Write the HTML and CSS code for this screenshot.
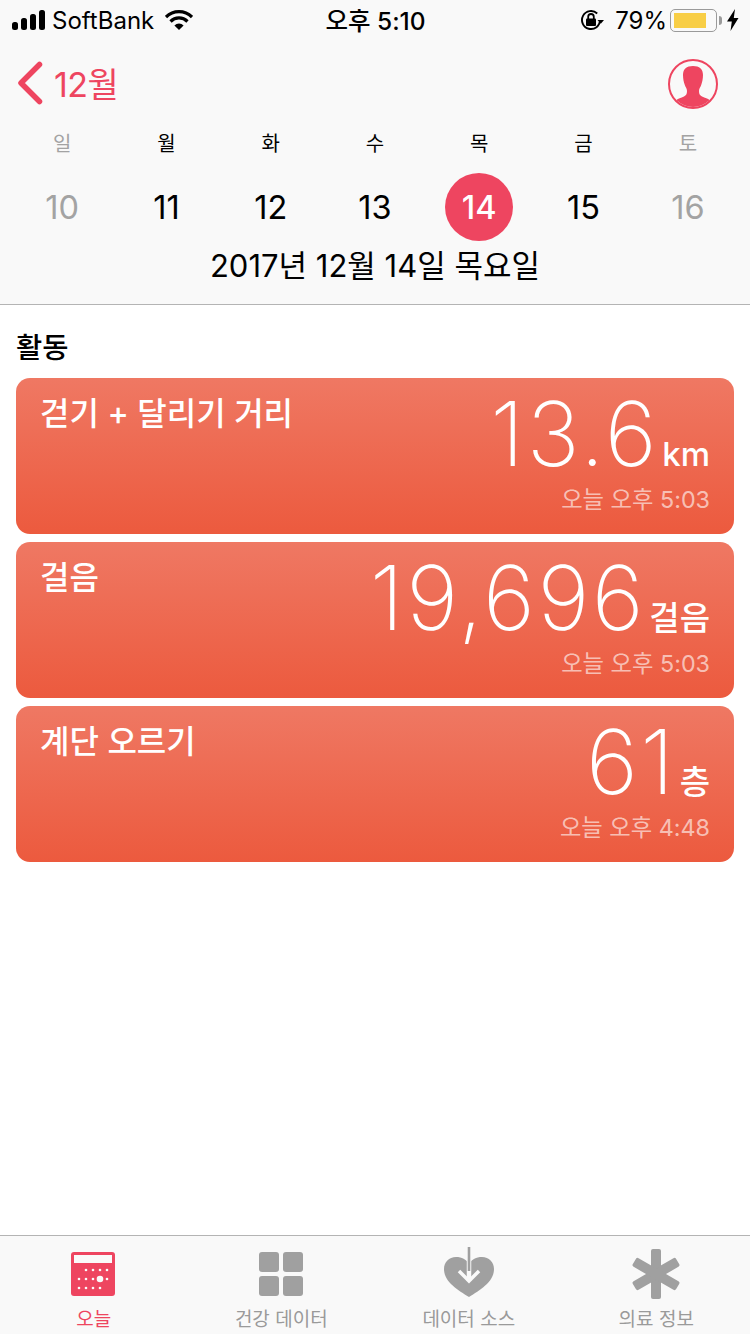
FILE: index.html
```html
<!DOCTYPE html>
<html lang="ko">
<head>
  <meta charset="UTF-8">
  <title>건강</title>
  <link rel="stylesheet" href="styles.css">
</head>
<body>
  <div class="app">
    <header class="top">
      <div class="status">
        <div class="status-left">
          <svg class="signal" width="33" height="20" viewBox="0 0 33 20">
            <rect x="0" y="12" width="6" height="8" rx="2.500" fill="#000"/>
            <rect x="9" y="8" width="6" height="12" rx="2.500" fill="#000"/>
            <rect x="18" y="4" width="6" height="16" rx="2.500" fill="#000"/>
            <rect x="27" y="0" width="6" height="20" rx="2.500" fill="#000"/>
          </svg>
          <span class="carrier">SoftBank</span>
          <svg class="wifi" width="28" height="20" viewBox="0 0 28 20">
            <path d="M14 20L9.400 15.400A6.500 6.500 0 0 1 18.600 15.400z" fill="#000"/>
            <path d="M5.500 11.500A12 12 0 0 1 22.500 11.500" fill="none" stroke="#000" stroke-width="3.200"/>
            <path d="M1 7A18.500 18.500 0 0 1 27 7" fill="none" stroke="#000" stroke-width="3.200"/>
          </svg>
        </div>
        <div class="clock">오후 5:10</div>
        <div class="status-right">
          <svg class="lock" width="24" height="22" viewBox="0 0 24 22">
            <path d="M20 11a9 9 0 1 1-2.800-6.500" fill="none" stroke="#000" stroke-width="1.900"/>
            <path d="M17.500 11h6.500l-3.200 3.800z" fill="#000"/>
            <rect x="6" y="9.500" width="10" height="7.500" rx="1" fill="#000"/>
            <path d="M8.200 10V7.800a2.800 2.800 0 0 1 5.600 0V10" fill="none" stroke="#000" stroke-width="1.800"/>
          </svg>
          <span class="percent">79%</span>
          <div class="battery">
            <div class="battery-shell"><div class="battery-fill"></div></div>
            <div class="battery-tip"></div>
          </div>
          <svg class="bolt" width="12" height="22" viewBox="0 0 12 22">
            <path d="M8 0L0 12.500h4.800L3.500 22l8-13H6.800z" fill="#000"/>
          </svg>
        </div>
      </div>

      <div class="nav">
        <div class="back">
          <svg width="26" height="44" viewBox="0 0 26 44">
            <path d="M22.500 3.500L4 22l18.500 18.500" fill="none" stroke="#ee4560" stroke-width="5.500" stroke-linecap="round" stroke-linejoin="round"/>
          </svg>
          <span class="month">12월</span>
        </div>
        <svg class="avatar" width="50" height="50" viewBox="0 0 50 50">
          <defs><clipPath id="avatarClip"><circle cx="25" cy="25" r="23"/></clipPath></defs>
          <circle cx="25" cy="25" r="24" fill="none" stroke="#ee4560" stroke-width="2"/>
          <path clip-path="url(#avatarClip)" d="M25 7c-6.500 0-10 3-10 9 0 4 .8 7 1.800 10 .6 2 2.200 3.500 2.200 6 0 2.800-.8 4.500-3 5.500-3 1.300-6 2-7.500 3.500-1 1-1.500 4-1.500 9h36c0-5-.5-8-1.500-9-1.500-1.500-4.500-2.200-7.500-3.500-2.200-1-3-2.700-3-5.500 0-2.500 1.600-4 2.200-6 1-3 1.800-6 1.800-10 0-6-3.500-9-10-9z" fill="#ee4560"/>
        </svg>
      </div>

      <div class="week">
        <span class="wd off">일</span>
        <span class="wd">월</span>
        <span class="wd">화</span>
        <span class="wd">수</span>
        <span class="wd">목</span>
        <span class="wd">금</span>
        <span class="wd off">토</span>
        <span class="day off">10</span>
        <span class="day">11</span>
        <span class="day">12</span>
        <span class="day">13</span>
        <span class="day"><span class="today">14</span></span>
        <span class="day">15</span>
        <span class="day off">16</span>
      </div>
      <div class="date">2017년 12월 14일 목요일</div>
    </header>

    <main class="content">
      <h2 class="section">활동</h2>
      <div class="cards">
        <div class="card">
          <div class="card-title">걷기 + 달리기 거리</div>
          <div class="card-data">
            <div class="reading"><span class="num">13.6</span><span class="unit">km</span></div>
            <div class="when">오늘 오후 5:03</div>
          </div>
        </div>
        <div class="card">
          <div class="card-title">걸음</div>
          <div class="card-data">
            <div class="reading"><span class="num">19,696</span><span class="unit">걸음</span></div>
            <div class="when">오늘 오후 5:03</div>
          </div>
        </div>
        <div class="card">
          <div class="card-title">계단 오르기</div>
          <div class="card-data">
            <div class="reading"><span class="num">61</span><span class="unit">층</span></div>
            <div class="when">오늘 오후 4:48</div>
          </div>
        </div>
      </div>
    </main>

    <nav class="tabs">
      <div class="tab active">
        <svg class="icon-cal" width="44" height="44" viewBox="0 0 44 44">
          <rect width="44" height="44" rx="3" fill="#ee4560"/>
          <rect x="3" y="3" width="38" height="8" fill="#fafafa"/>
          <g fill="#fafafa">
            <circle cx="15" cy="18" r="1.300"/><circle cx="22" cy="18" r="1.300"/><circle cx="29" cy="18" r="1.300"/><circle cx="36" cy="18" r="1.300"/>
            <circle cx="8" cy="27" r="1.300"/><circle cx="15" cy="27" r="1.300"/><circle cx="22" cy="27" r="1.300"/><circle cx="29" cy="27" r="3.300"/><circle cx="36" cy="27" r="1.300"/>
            <circle cx="8" cy="36" r="1.300"/><circle cx="15" cy="36" r="1.300"/><circle cx="22" cy="36" r="1.300"/><circle cx="29" cy="36" r="1.300"/>
          </g>
        </svg>
        <span>오늘</span>
      </div>
      <div class="tab">
        <svg class="icon-grid" width="44" height="44" viewBox="0 0 44 44" fill="#a0a0a0">
          <rect width="20" height="20" rx="3"/><rect x="24" width="20" height="20" rx="3"/>
          <rect y="24" width="20" height="20" rx="3"/><rect x="24" y="24" width="20" height="20" rx="3"/>
        </svg>
        <span>건강 데이터</span>
      </div>
      <div class="tab">
        <svg class="icon-heart" width="50" height="50" viewBox="0 0 50 50">
          <path d="M25 50C14 43 0 35 0 22 0 15 5 10 12 10c6 0 10 2.500 13 6.500C28 12.500 32 10 38 10c7 0 12 5 12 12 0 13-14 21-25 28z" fill="#a0a0a0"/>
          <path d="M25 12v22" stroke="#fafafa" stroke-width="4.500" fill="none"/>
          <path d="M25 0v24" stroke="#a0a0a0" stroke-width="2.600" fill="none"/>
          <path d="M15 24l10 10 10-10" stroke="#fafafa" stroke-width="3.500" fill="none"/>
        </svg>
        <span>데이터 소스</span>
      </div>
      <div class="tab">
        <svg class="icon-star" width="48" height="50" viewBox="0 0 48 50">
          <g fill="#a0a0a0">
            <rect x="19" y="0" width="10" height="50" rx="2"/>
            <rect x="19" y="0" width="10" height="50" rx="2" transform="rotate(60 24 25)"/>
            <rect x="19" y="0" width="10" height="50" rx="2" transform="rotate(-60 24 25)"/>
          </g>
        </svg>
        <span>의료 정보</span>
      </div>
    </nav>
  </div>
</body>
</html>
```

FILE: styles.css
```css
* {
  box-sizing: border-box;
}
body {
  margin: 0;
  background: #fff;
  color: #000;
  font-family: Inter, "Noto Sans CJK KR", sans-serif;
}
.app {
  display: flex;
  flex-direction: column;
  height: 1334px;
  overflow: hidden;
}

/* header */
.top {
  height: 305px;
  background: #f9f9f9;
  border-bottom: 1px solid #b4b4b4;
}
.status {
  display: grid;
  grid-template-columns: 1fr auto 1fr;
  align-items: center;
  height: 40px;
  padding: 0 11px 0 12px;
}
.status-left, .status-right {
  display: flex;
  align-items: center;
}
.status-right {
  justify-content: flex-end;
}
.carrier {
  margin-left: 7px;
  font-size: 24px;
}
.wifi {
  margin-left: 11px;
}
.clock {
  margin-top: -1px;
  font-weight: 500;
  font-size: 24.500px;
}
.percent {
  margin-left: 11px;
  font-size: 24px;
}
.battery {
  display: flex;
  align-items: center;
  margin-left: 3px;
}
.battery-shell {
  width: 47px;
  height: 23px;
  padding: 3px;
  border: 1.500px solid #9a9a9a;
  border-radius: 5px;
}
.battery-fill {
  width: 32px;
  height: 100%;
  background: #f8ce46;
}
.battery-tip {
  width: 3px;
  height: 9px;
  margin-left: 2px;
  background: #9a9a9a;
  border-radius: 0 3px 3px 0;
}
.bolt {
  margin-left: 5px;
}
.nav {
  display: flex;
  justify-content: space-between;
  align-items: flex-start;
  height: 84px;
  padding: 19px 32px 0 17px;
}
.back {
  display: flex;
  align-items: center;
  gap: 11px;
  height: 50px;
}
.back svg {
  margin-top: -2px;
}
.month {
  margin-top: -4px;
  color: #ee4560;
  font-size: 34px;
  letter-spacing: -0.500px;
}
.week {
  display: grid;
  grid-template-columns: repeat(7, 1fr);
  grid-template-rows: 38px 78px;
  row-gap: 6px;
  padding: 0 10px;
  text-align: center;
}
.wd {
  align-self: center;
  margin-top: -2px;
  font-size: 20px;
}
.day {
  display: flex;
  justify-content: center;
  align-items: center;
  font-size: 32.500px;
}
.off {
  color: #a3a3a3;
}
.today {
  display: flex;
  justify-content: center;
  align-items: center;
  width: 68px;
  height: 68px;
  border-radius: 50%;
  background: #ee4560;
  color: #fff;
  font-weight: 500;
}
.date {
  text-align: center;
  font-size: 31px;
  line-height: 40px;
}

/* cards */
.content {
  flex: 1;
  padding: 23px 16px 0;
}
.section {
  margin: 0 0 10px;
  font-size: 28.500px;
  font-weight: 500;
  line-height: 40px;
}
.cards {
  display: flex;
  flex-direction: column;
  gap: 8px;
}
.card {
  display: flex;
  justify-content: space-between;
  height: 156px;
  padding: 15px 24px 0;
  border-radius: 14px;
  background: linear-gradient(#ef7863, #ec5a3e);
  color: #fff;
}
.card-title {
  font-size: 32px;
  font-weight: 500;
  line-height: 42px;
}
.card-data {
  margin-top: -4px;
  text-align: right;
}
.reading {
  display: flex;
  justify-content: flex-end;
  align-items: baseline;
  gap: 3px;
  height: 96px;
  line-height: 90px;
}
.num {
  font-size: 89px;
  font-weight: 250;
  letter-spacing: 2.500px;
}
.unit {
  font-size: 33px;
  font-weight: 500;
}
.when {
  color: rgba(255, 255, 255, 0.62);
  font-size: 23.300px;
  line-height: 30px;
}

/* tab bar */
.tabs {
  display: grid;
  grid-template-columns: repeat(4, 1fr);
  height: 99px;
  background: #f9f9f9;
  border-top: 1px solid #b4b4b4;
}
.tab {
  display: flex;
  flex-direction: column;
  align-items: center;
  justify-content: flex-end;
  color: #9a9a9a;
  font-size: 19px;
  line-height: 28px;
}
.icon-cal {
  margin: 0 2px 10px 0;
}
.icon-grid {
  margin-bottom: 10px;
}
.icon-heart {
  margin-bottom: 9px;
}
.icon-star {
  margin-bottom: 7px;
}
.tab.active {
  color: #ee4560;
}
```
